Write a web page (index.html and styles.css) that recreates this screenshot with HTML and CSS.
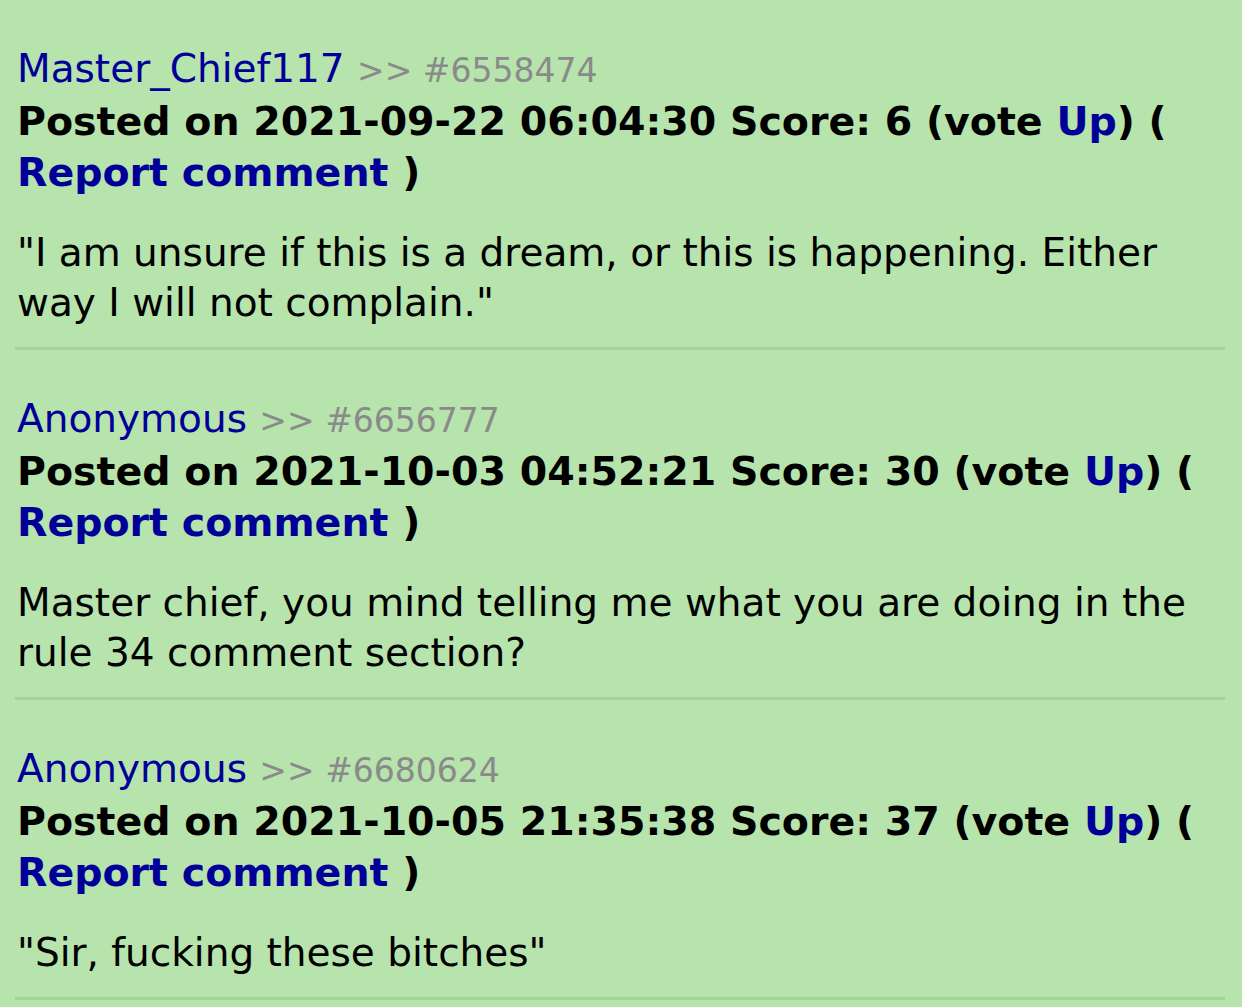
FILE: index.html
```html
<!doctype html>
<html lang="en">
<head>
    <meta charset="UTF-8">
    <title>Comments</title>
    <link rel="stylesheet" href="styles.css">
</head>
<body>
<div class="comments">
    <div class="comment">
        <div class="head">
            <a href="#" class="author">Master_Chief117</a> <span class="ref">&gt;&gt; #6558474</span>
        </div>
        <div class="meta">Posted on 2021-09-22 06:04:30 Score: 6 (vote <a href="#">Up</a>) ( <a href="#">Report comment</a> )</div>
        <p class="body">"I am unsure if this is a dream, or this is happening. Either way I will not complain."</p>
    </div>
    <div class="comment">
        <div class="head">
            <a href="#" class="author">Anonymous</a> <span class="ref">&gt;&gt; #6656777</span>
        </div>
        <div class="meta">Posted on 2021-10-03 04:52:21 Score: 30 (vote <a href="#">Up</a>) ( <a href="#">Report comment</a> )</div>
        <p class="body">Master chief, you mind telling me what you are doing in the rule 34 comment section?</p>
    </div>
    <div class="comment">
        <div class="head">
            <a href="#" class="author">Anonymous</a> <span class="ref">&gt;&gt; #6680624</span>
        </div>
        <div class="meta">Posted on 2021-10-05 21:35:38 Score: 37 (vote <a href="#">Up</a>) ( <a href="#">Report comment</a> )</div>
        <p class="body">"Sir, fucking these bitches"</p>
    </div>
</div>
</body>
</html>
```

FILE: styles.css
```css
body {
    margin: 0;
    background-color: #b7e3ac;
    font-family: "DejaVu Sans", Verdana, sans-serif;
    font-size: 39px;
    line-height: 50px;
    color: #000;
}

a {
    color: #000099;
    text-decoration: none;
}

.comments {
    margin-top: -3px;
    padding: 0 17px 0 15px;
}

.comment {
    border-top: 3px solid #a5d19a;
    padding: 44px 0 19px 2px;
}

.comment:last-child {
    border-bottom: 3px solid #a5d19a;
}

.ref {
    color: #8a8a8a;
    font-size: 33px;
}

.meta {
    font-weight: bold;
    font-size: 39.5px;
    line-height: 51px;
}

.body {
    margin: 30px 0 0;
}
```
